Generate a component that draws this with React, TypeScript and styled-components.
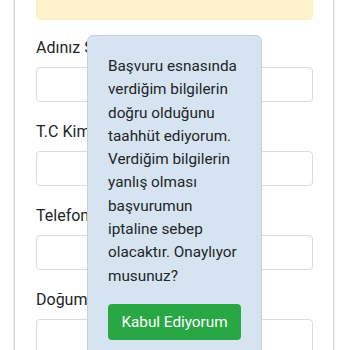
import React from 'react';
import styled, { createGlobalStyle } from 'styled-components';

const GlobalStyle = createGlobalStyle`
  html, body {
    margin: 0;
    padding: 0;
    background: #ffffff;
    font-family: Roboto, "Noto Sans", "Liberation Sans", sans-serif;
    color: #212529;
  }
  * {
    box-sizing: border-box;
  }
`;

const Page = styled.div`
  position: relative;
  width: 350px;
  height: 350px;
  overflow: hidden;
`;

const Card = styled.div`
  margin-left: 14px;
  width: 320px;
  min-height: 400px;
  border: 1px solid #d4d4d4;
  border-top: none;
  box-shadow: 0 0 2px rgba(0, 0, 0, 0.18);
  padding: 0 20px 20px 21px;
  background: #ffffff;
`;

const Alert = styled.div`
  height: 20px;
  background: #fff3cd;
  border: 1px solid #ffeeba;
  border-top: none;
  border-radius: 0 0 5px 5px;
  margin-bottom: 16px;
`;

const Group = styled.div`
  margin-bottom: 18px;
`;

const Label = styled.label`
  display: block;
  font-size: 16px;
  line-height: 24px;
  margin-bottom: 7px;
  white-space: nowrap;
  color: #212529;
`;

const Input = styled.input`
  display: block;
  width: 277px;
  height: 35px;
  border: 1px solid #dcdcdc;
  border-radius: 4px;
  background: #ffffff;
  font: inherit;
`;

const Popover = styled.div`
  position: absolute;
  left: 87px;
  top: 35px;
  width: 175px;
  background: #d6e4f1;
  border: 1px solid #c3d3e3;
  border-radius: 6px;
  padding: 19px 20px 20px;
`;

const Message = styled.p`
  margin: 0 0 16px;
  font-size: 15.3px;
  line-height: 23.3px;
  color: #212529;
`;

const AcceptButton = styled.button`
  display: block;
  width: 100%;
  height: 36px;
  padding: 0 8px;
  border: none;
  border-radius: 4px;
  background: #28a745;
  color: #ffffff;
  font-family: inherit;
  font-size: 15.3px;
  line-height: 24px;
`;

const fields = ['Adınız Soyadınız', 'T.C Kimlik No', 'Telefon', 'Doğum Tarihi'];

export default function App() {
  return (
    <Page>
      <GlobalStyle />
      <Card>
        <Alert />
        {fields.map((f) => (
          <Group key={f}>
            <Label>{f}</Label>
            <Input type="text" />
          </Group>
        ))}
      </Card>
      <Popover>
        <Message>
          Başvuru esnasında verdiğim bilgilerin doğru olduğunu taahhüt ediyorum. Verdiğim
          bilgilerin yanlış olması başvurumun iptaline sebep olacaktır. Onaylıyor musunuz?
        </Message>
        <AcceptButton type="button">Kabul Ediyorum</AcceptButton>
      </Popover>
    </Page>
  );
}
